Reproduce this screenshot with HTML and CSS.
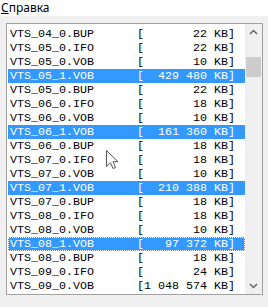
FILE: index.html
```html
<!DOCTYPE html>
<html>
<head>
<meta charset="utf-8">
<link rel="stylesheet" href="styles.css">
</head>
<body>
<div class="menubar"><span class="menu-item"><u>С</u>правка</span></div>
<div class="panel">
  <div class="listbox">
    <div class="rows">
      <div class="row"><span class="name">VTS_04_0.BUP</span><span class="size">[       22 KB]</span></div>
      <div class="row"><span class="name">VTS_05_0.IFO</span><span class="size">[       22 KB]</span></div>
      <div class="row"><span class="name">VTS_05_0.VOB</span><span class="size">[       10 KB]</span></div>
      <div class="row sel"><span class="name">VTS_05_1.VOB</span><span class="size">[  429 480 KB]</span></div>
      <div class="row"><span class="name">VTS_05_0.BUP</span><span class="size">[       22 KB]</span></div>
      <div class="row"><span class="name">VTS_06_0.IFO</span><span class="size">[       18 KB]</span></div>
      <div class="row"><span class="name">VTS_06_0.VOB</span><span class="size">[       10 KB]</span></div>
      <div class="row sel"><span class="name">VTS_06_1.VOB</span><span class="size">[  161 360 KB]</span></div>
      <div class="row"><span class="name">VTS_06_0.BUP</span><span class="size">[       18 KB]</span></div>
      <div class="row"><span class="name">VTS_07_0.IFO</span><span class="size">[       18 KB]</span></div>
      <div class="row"><span class="name">VTS_07_0.VOB</span><span class="size">[       10 KB]</span></div>
      <div class="row sel"><span class="name">VTS_07_1.VOB</span><span class="size">[  210 388 KB]</span></div>
      <div class="row"><span class="name">VTS_07_0.BUP</span><span class="size">[       18 KB]</span></div>
      <div class="row"><span class="name">VTS_08_0.IFO</span><span class="size">[       18 KB]</span></div>
      <div class="row"><span class="name">VTS_08_0.VOB</span><span class="size">[       10 KB]</span></div>
      <div class="row sel focus"><span class="name">VTS_08_1.VOB</span><span class="size">[   97 372 KB]</span></div>
      <div class="row"><span class="name">VTS_08_0.BUP</span><span class="size">[       18 KB]</span></div>
      <div class="row"><span class="name">VTS_09_0.IFO</span><span class="size">[       24 KB]</span></div>
      <div class="row"><span class="name">VTS_09_0.VOB</span><span class="size">[1 048 574 KB]</span></div>
    </div>
    <div class="scrollbar">
      <div class="arrow"><svg width="17" height="17" viewBox="0 0 17 17"><path d="M5 10 L8.5 6.5 L12 10" fill="none" stroke="#606060" stroke-width="1.4"/></svg></div>
      <div class="track"><div class="thumb"></div></div>
      <div class="arrow"><svg width="17" height="17" viewBox="0 0 17 17"><path d="M5 7 L8.5 10.5 L12 7" fill="none" stroke="#606060" stroke-width="1.4"/></svg></div>
    </div>
  </div>
  <svg class="cursor" width="13" height="20" viewBox="0 0 13 20"><path d="M0.5 0.5 L0.5 16.5 L4.5 12.8 L7 18.5 L9.5 17.5 L7 11.7 L12 11.7 Z" fill="#fff" stroke="#555" stroke-width="1"/></svg>
</div>
</body>
</html>
```
FILE: styles.css
```css
html, body {
  margin: 0;
  padding: 0;
}
body {
  width: 268px;
  height: 307px;
  background: #f0f0f0;
  overflow: hidden;
  font-family: "Noto Sans", "Liberation Sans", sans-serif;
}
.menubar {
  height: 16px;
  background: #ffffff;
  font-size: 12px;
  line-height: 15px;
  color: #000;
}
.menu-item {
  display: inline-block;
  padding-left: 1px;
}
.menu-item u {
  text-underline-offset: 1px;
}
.panel {
  position: relative;
  padding: 7px 0 0 6px;
}
.listbox {
  width: 255px;
  height: 270px;
  border: 1px solid #a0a0a0;
  background: #fff;
  display: flex;
}
.rows {
  width: 237px;
  padding: 3px 0 0 1px;
  font-family: "Liberation Mono", "Courier New", monospace;
  font-size: 11.67px;
  color: #000;
}
.row {
  height: 14px;
  line-height: 14px;
  display: flex;
  padding-left: 2px;
  white-space: pre;
}
.row.sel {
  background: #3399ff;
  color: #fff;
}
.row.focus {
  outline: 1px dotted #ffffff;
  outline-offset: -1px;
}
.name {
  width: 127px;
}
.scrollbar {
  width: 17px;
  background: #f0f0f0;
  display: flex;
  flex-direction: column;
}
.arrow {
  height: 17px;
}
.arrow svg {
  display: block;
}
.track {
  flex: 1;
  padding-top: 16px;
}
.thumb {
  margin: 0 1px;
  height: 20px;
  background: #cdcdcd;
}
.cursor {
  position: absolute;
  left: 106px;
  top: 134px;
}
```
